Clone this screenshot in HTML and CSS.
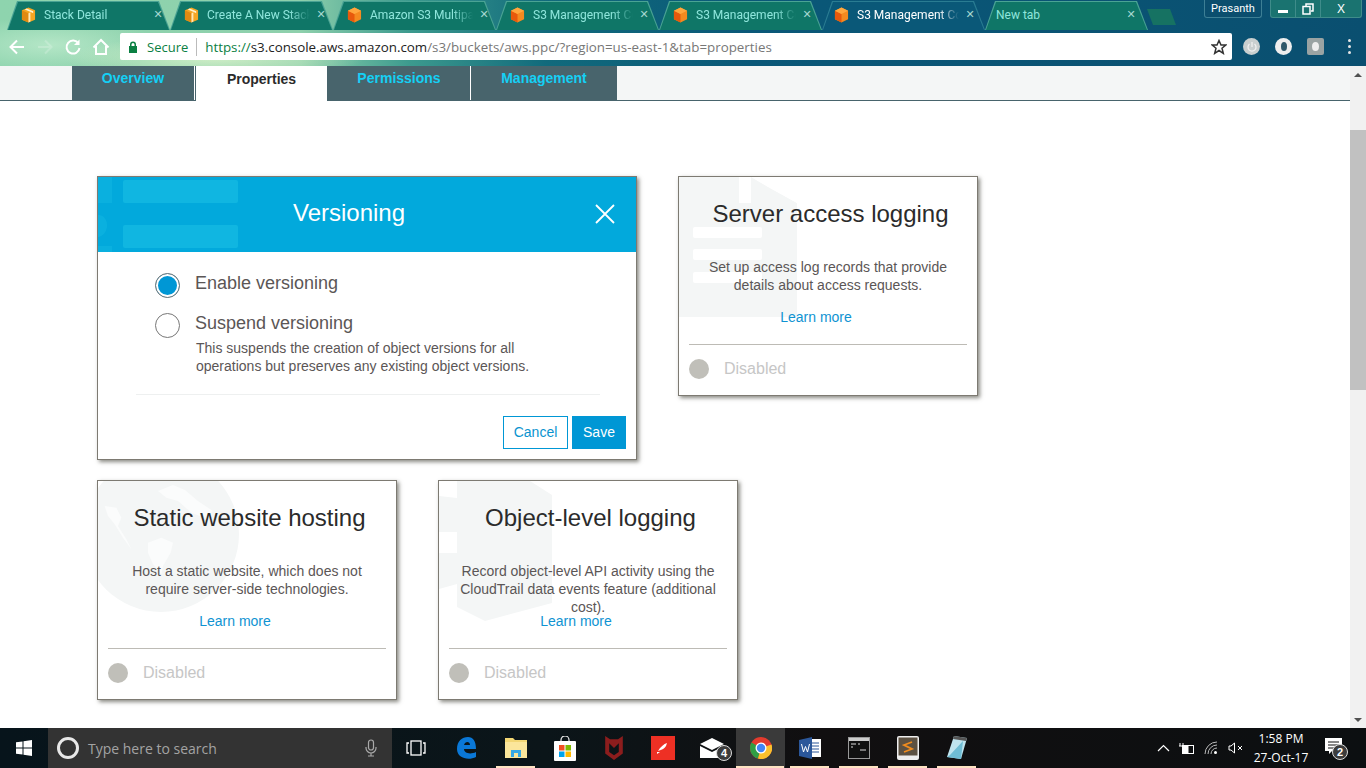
FILE: index.html
```html
<!DOCTYPE html>
<html lang="en">

<head>
    <meta charset="UTF-8">
    <meta name="viewport" content="width=device-width, initial-scale=1.0">
    <title>S3 Management Console</title>
    <link rel="stylesheet" href="styles.css">
</head>

<body>
    <svg class="defs" width="0" height="0">
        <symbol id="box-amber" viewBox="0 0 16 16">
            <path d="M8 0 15 3V13L8 16 1 13V3Z" fill="#f5a623"/>
            <path d="M1 3 8 6V16L1 13Z" fill="#e08a12"/>
            <path d="M6 1 13 4V6L11 5 4 2Z" fill="#fff2cc"/>
            <path d="M8 6 10 5V15L8 16Z" fill="#ffe9b8"/>
        </symbol>
        <symbol id="box-orange" viewBox="0 0 16 16">
            <path d="M8 0 15 3.500V12.500L8 16 1 12.500V3.500Z" fill="#f58a1f"/>
            <path d="M1 3.500 8 7V16L1 12.500Z" fill="#e8590c"/>
            <path d="M8 0 15 3.500 8 7 1 3.500Z" fill="#ffa63d"/>
        </symbol>
    </svg>

    <!-- browser window top -->
    <header class="chrome">
        <div class="tabstrip">
            <div class="tab"><svg class="favicon"><use href="#box-amber"/></svg><span class="tab-title">Stack Detail</span><span class="tab-close">✕</span></div>
            <div class="tab"><svg class="favicon"><use href="#box-amber"/></svg><span class="tab-title">Create A New Stack</span><span class="tab-close">✕</span></div>
            <div class="tab"><svg class="favicon"><use href="#box-orange"/></svg><span class="tab-title">Amazon S3 Multipa</span><span class="tab-close">✕</span></div>
            <div class="tab"><svg class="favicon"><use href="#box-orange"/></svg><span class="tab-title">S3 Management Co</span><span class="tab-close">✕</span></div>
            <div class="tab"><svg class="favicon"><use href="#box-orange"/></svg><span class="tab-title">S3 Management Co</span><span class="tab-close">✕</span></div>
            <div class="tab tab-active"><svg class="favicon"><use href="#box-orange"/></svg><span class="tab-title">S3 Management Co</span><span class="tab-close">✕</span></div>
            <div class="tab tab-new"><span class="tab-title">New tab</span><span class="tab-close">✕</span></div>
            <div class="newtab-btn"></div>
            <div class="window-controls">
                <div class="profile">Prasanth</div>
                <div class="win-buttons">
                    <span class="win-btn"><svg width="12" height="12" viewBox="0 0 12 12"><path d="M1 7H11V10H1Z" fill="#fff"/></svg></span>
                    <span class="win-btn"><svg width="12" height="12" viewBox="0 0 12 12" fill="none" stroke="#fff" stroke-width="1.500"><path d="M4 3V1H11V8H9M1 3.500H8V11H1Z"/></svg></span>
                    <span class="win-btn win-close">X</span>
                </div>
            </div>
        </div>
        <div class="toolbar">
            <svg class="tool" width="20" height="20" viewBox="0 0 20 20" fill="none" stroke="#fff" stroke-width="2"><path d="M17 10H4M10 3.500 3.500 10 10 16.500"/></svg>
            <svg class="tool tool-off" width="20" height="20" viewBox="0 0 20 20" fill="none" stroke="#fff" stroke-width="2"><path d="M3 10H16M10 3.500 16.500 10 10 16.500"/></svg>
            <svg class="tool" width="20" height="20" viewBox="0 0 20 20" fill="none" stroke="#fff" stroke-width="2"><path d="M15.500 6.500A6.500 6.500 0 1 0 16.500 11"/><path d="M16.500 2.500V8H11" fill="#fff" stroke="none"/></svg>
            <svg class="tool" width="20" height="20" viewBox="0 0 20 20" fill="none" stroke="#fff" stroke-width="2"><path d="M2.500 10.500 10 3 17.500 10.500M5 9V17H15V9"/></svg>
            <div class="omnibox">
                <svg class="lock" width="10" height="12" viewBox="0 0 10 12"><path d="M1 5H2V3.500A3 3 0 0 1 8 3.500V5H9V12H1ZM3.500 5H6.500V3.500A1.500 1.500 0 0 0 3.500 3.500Z" fill="#0b8043"/></svg>
                <span class="secure">Secure</span>
                <span class="url"><span class="url-scheme">https://</span><span class="url-host">s3.console.aws.amazon.com</span>/s3/buckets/aws.ppc/?region=us-east-1&amp;tab=properties</span>
                <svg class="star" width="16" height="16" viewBox="0 0 16 16" fill="none" stroke="#333" stroke-width="1.500"><path d="M8 1.500 10 6H14.800L11 9.200 12.300 14.300 8 11.500 3.700 14.300 5 9.200 1.200 6H6Z"/></svg>
            </div>
            <div class="extensions">
                <span class="ext ext-power"><svg width="10" height="10" viewBox="0 0 10 10" fill="none" stroke="#f0f0f0" stroke-width="1.300"><path d="M5 0V5M2.500 2A4 4 0 1 0 7.500 2"/></svg></span>
                <span class="ext ext-ring"></span>
                <span class="ext ext-square"></span>
                <span class="ext-menu"><i></i><i></i><i></i></span>
            </div>
        </div>
    </header>

    <div class="viewport">
        <main class="page">
            <nav class="subnav">
                <a class="subtab subtab-overview">Overview</a>
                <a class="subtab subtab-current">Properties</a>
                <a class="subtab subtab-permissions">Permissions</a>
                <a class="subtab subtab-management">Management</a>
            </nav>

            <div class="board">
                <div class="board-row">
                    <section class="modal">
                        <div class="modal-head">
                            <svg class="modal-mark" width="140" height="75" viewBox="0 0 140 75" fill="#10b6e1">
                                <rect x="25" y="3" width="115" height="23" rx="2"/>
                                <rect x="25" y="48" width="115" height="23" rx="2"/>
                                <path class="mark-faint" d="M0 0H14V26H0ZM0 38C12 38 12 58 0 60ZM0 69H14V75H0Z"/>
                            </svg>
                            <h2 class="modal-title">Versioning</h2>
                            <svg class="modal-close" width="20" height="20" viewBox="0 0 20 20" stroke="#fff" stroke-width="1.800"><path d="M1 1 19 19M19 1 1 19"/></svg>
                        </div>
                        <div class="modal-body">
                            <div class="option">
                                <span class="radio radio-on"></span>
                                <span class="option-label">Enable versioning</span>
                            </div>
                            <div class="option option-second">
                                <span class="radio"></span>
                                <div>
                                    <span class="option-label">Suspend versioning</span>
                                    <p class="option-note">This suspends the creation of object versions for all<br>operations but preserves any existing object versions.</p>
                                </div>
                            </div>
                        </div>
                        <div class="modal-foot">
                            <button class="btn btn-cancel">Cancel</button>
                            <button class="btn btn-save">Save</button>
                        </div>
                    </section>

                    <section class="card">
                        <svg class="card-mark" width="118" height="140" viewBox="0 0 118 140" fill="#f4f6f6">
                            <path d="M0 0H60V26H71V0L118 26V140H0Z" fill-rule="evenodd"/>
                            <g fill="#fff">
                                <path d="M60 0H72V26H60Z"/>
                                <path d="M72 0H118V26Z"/>
                                <rect x="14" y="50" width="69" height="11" rx="2"/>
                                <rect x="14" y="72" width="69" height="11" rx="2"/>
                                <rect x="14" y="95" width="69" height="11" rx="2"/>
                            </g>
                            <path d="M72 0 114 26H72Z"/>
                        </svg>
                        <h3 class="card-title">Server access logging</h3>
                        <p class="card-desc">Set up access log records that provide details about access requests.</p>
                        <a class="card-link">Learn more</a>
                        <div class="card-status"><span class="dot"></span><span class="status-text">Disabled</span></div>
                    </section>
                </div>

                <div class="board-row">
                    <section class="card">
                        <svg class="card-mark" width="142" height="134" viewBox="0 0 142 134">
                            <circle cx="63" cy="53" r="78" fill="#f4f6f6"/>
                            <g transform="scale(0.3333)" fill="#fbfcfc">
                                <path d="M180 30 225 12 262 28 300 60 345 90 320 110 280 95 240 60 205 50Z"/>
                                <path d="M20 75 55 80 70 110 60 135 85 175 100 205 75 170 50 130 30 105Z"/>
                                <path d="M150 185 190 170 225 185 218 215 195 255 190 280 165 250 150 215Z"/>
                            </g>
                        </svg>
                        <h3 class="card-title">Static website hosting</h3>
                        <p class="card-desc">Host a static website, which does not require server-side technologies.</p>
                        <a class="card-link">Learn more</a>
                        <div class="card-status"><span class="dot"></span><span class="status-text">Disabled</span></div>
                    </section>

                    <section class="card">
                        <svg class="card-mark" width="114" height="140" viewBox="0 0 114 140" fill="#f4f6f6">
                            <path d="M18 0H91L113 14V122L46 140 18 126Z"/>
                            <path d="M0 15 18 17V51H0ZM0 72H18V103L0 108Z"/>
                        </svg>
                        <h3 class="card-title">Object-level logging</h3>
                        <p class="card-desc">Record object-level API activity using the CloudTrail data events feature (additional cost).</p>
                        <a class="card-link">Learn more</a>
                        <div class="card-status"><span class="dot"></span><span class="status-text">Disabled</span></div>
                    </section>
                </div>
            </div>
        </main>

        <div class="scrollbar">
            <span class="arrow-up"></span>
            <span class="thumb"></span>
            <span class="arrow-down"></span>
        </div>
    </div>

    <!-- windows taskbar -->
    <footer class="taskbar">
        <div class="start">
            <svg width="16" height="16" viewBox="0 0 16 16" fill="#fff"><path d="M0 2.300 6.500 1.400V7.500H0ZM7.500 1.300 16 0V7.500H7.500ZM0 8.500H6.500V14.600L0 13.700ZM7.500 8.500H16V16L7.500 14.700Z"/></svg>
        </div>
        <div class="search">
            <span class="cortana"></span>
            <span class="search-text">Type here to search</span>
            <svg class="mic" width="12" height="18" viewBox="0 0 12 18" fill="none" stroke="#aaa" stroke-width="1.200"><rect x="3.500" y="1" width="5" height="10" rx="2.500"/><path d="M1 8V9A5 5 0 0 0 11 9V8M6 14V17M3 17H9"/></svg>
        </div>
        <div class="apps">
            <div class="app app-view"><svg width="20" height="16" viewBox="0 0 20 16" fill="none" stroke="#fff" stroke-width="1.300"><rect x="5" y="1" width="10" height="14"/><path d="M3 3H1V13H3M17 3H19V13H17"/></svg></div>
            <div class="app"><svg width="21" height="24" viewBox="0 0 21 24"><path d="M1 13C1 5 6 1 12 1 17 1 20 5 20 13H8C8 17 14 19 20 16V21C12 25 1 22 1 13ZM8 9H14C14 5 9 5 8 9Z" fill="#0a78d7"/></svg></div>
            <div class="app app-run"><svg width="22" height="22" viewBox="0 0 22 22"><path d="M0 1H8L10 3H22V21H0Z" fill="#f3d774"/><path d="M0 5H22V21H0Z" fill="#fbe69b"/><path d="M6 20V13H16V20H13V16H9V20Z" fill="#38a9e4"/></svg></div>
            <div class="app"><svg width="22" height="25" viewBox="0 0 22 25"><path d="M7 6V4A4 4 0 0 1 15 4V6" fill="none" stroke="#eee" stroke-width="1.200"/><rect y="5" width="22" height="20" rx="1" fill="#fff"/><rect x="5" y="9" width="5.500" height="5.500" fill="#f25022"/><rect x="11.500" y="9" width="5.500" height="5.500" fill="#7fba00"/><rect x="5" y="15.500" width="5.500" height="5.500" fill="#00a4ef"/><rect x="11.500" y="15.500" width="5.500" height="5.500" fill="#ffb900"/></svg></div>
            <div class="app"><svg width="22" height="24" viewBox="0 0 22 30"><path d="M0 0 6 4H16L22 0V22L11 30 0 22ZM5 9V20L11 24 17 20V9L11 15Z" fill="#8c1d1d"/></svg></div>
            <div class="app"><svg width="24" height="24" viewBox="0 0 24 24"><rect width="24" height="24" fill="#ee3024"/><path d="M7 15C9 11 13 8 16 7L15 10C14 12 11 14 7 15ZM6 16H9L6 18Z" fill="#fff"/></svg></div>
            <div class="app"><svg width="24" height="20" viewBox="0 0 24 20"><path d="M0 6 12 0 24 6 12 12Z" fill="#fff"/><path d="M0 8 12 14 24 8V20H0Z" fill="#fff"/></svg><span class="app-badge">4</span></div>
            <div class="app app-run app-current">
                <svg width="22" height="22" viewBox="0 0 22 22"><circle cx="11" cy="11" r="11" fill="#e33b2e"/><path d="M11 11 1.500 5.500A11 11 0 0 0 8 21.600Z" fill="#2f9e44"/><path d="M11 11 8 21.600A11 11 0 0 0 21.500 7.500Z" fill="#fbc02d"/><circle cx="11" cy="11" r="5.500" fill="#fff"/><circle cx="11" cy="11" r="4.200" fill="#4285f4"/></svg>
            </div>
            <div class="app app-run"><svg width="22" height="22" viewBox="0 0 22 22"><rect x="8" y="2" width="14" height="18" fill="#fff"/><path d="M11 6H20M11 9H20M11 12H20M11 15H20" stroke="#2b579a"/><path d="M0 3 13 0V22L0 19Z" fill="#2b579a"/><path d="M2.500 7 4.500 15 6.500 9.500 8.500 15 10.500 7" fill="none" stroke="#fff"/></svg></div>
            <div class="app app-run"><svg width="22" height="22" viewBox="0 0 22 22"><rect x=".5" y=".5" width="21" height="21" fill="#111" stroke="#999"/><rect x="1" y="1" width="20" height="3" fill="#ccc"/><path d="M3 7H8M10 7H12M3 10H5M12 13H18" stroke="#ddd"/></svg></div>
            <div class="app app-run"><svg width="22" height="24" viewBox="0 0 22 24"><rect width="22" height="24" rx="2" fill="#eee"/><rect x="1.500" y="1.500" width="19" height="18" fill="#5c5142"/><path d="M15 6 7 9 15 13 7 16" fill="none" stroke="#f08c1e" stroke-width="1.800"/></svg></div>
            <div class="app app-run"><svg width="22" height="26" viewBox="0 0 22 26"><path d="M8 1 21 3 15 24 1 22Z" fill="#bfe4ee"/><path d="M8 1 21 3 20 6 7 4Z" fill="#555"/><path d="M4 20 17 6 15 24 1 22Z" fill="#6fbdd4"/></svg></div>
        </div>
        <div class="tray">
            <svg class="tray-icon" width="13" height="8" viewBox="0 0 13 8" fill="none" stroke="#fff" stroke-width="1.200"><path d="M1 7 6.500 1.500 12 7"/></svg>
            <svg class="tray-icon" width="16" height="13" viewBox="0 0 16 13" fill="none" stroke="#fff"><rect x="3.500" y="3.500" width="11" height="8"/><rect x="4" y="4" width="5" height="7" fill="#fff"/><path d="M1 1V4M4 1V4M0 4H5V5L3 7"/></svg>
            <svg class="tray-icon" width="15" height="14" viewBox="0 0 15 14" fill="none" stroke="#bbb"><path d="M1 13A12 12 0 0 1 13 1M4 13A9 9 0 0 1 13 4M7 13A6 6 0 0 1 13 7"/><circle cx="11.500" cy="11.500" r="1.500" fill="#fff" stroke="none"/></svg>
            <svg class="tray-icon" width="15" height="12" viewBox="0 0 15 12" fill="none" stroke="#fff"><path d="M1 4H3L6.500 1V11L3 8H1ZM10 4 14 8M14 4 10 8"/></svg>
            <div class="clock"><span>1:58 PM</span><span>27-Oct-17</span></div>
            <div class="notify">
                <svg width="17" height="17" viewBox="0 0 17 17"><path d="M0 0H17V13H7L4 16V13H0Z" fill="#fff"/><path d="M3 4H14M3 7H14M3 10H10" stroke="#111"/></svg>
                <span class="app-badge notify-badge">2</span>
            </div>
        </div>
    </footer>
</body>

</html>
```
FILE: styles.css
```css
* {
  box-sizing: border-box;
}
body {
  margin: 0;
  width: 1366px;
  height: 768px;
  overflow: hidden;
  display: flex;
  flex-direction: column;
  background: #fff;
  font-family: 'Liberation Sans', Arial, sans-serif;
}
.defs {
  position: absolute;
}
/* Browser top */
.chrome {
  height: 66px;
  flex: none;
  background:
    radial-gradient(ellipse 150px 22px at 215px 58px, rgba(225, 245, 205, 0.8) 0%, rgba(225, 245, 205, 0) 100%),
    radial-gradient(ellipse 110px 28px at 50px 45px, rgba(190, 235, 205, 0.8) 0%, rgba(190, 235, 205, 0) 100%),
    linear-gradient(90deg, #8ed4ae 0%, #8ed0ac 22%, #3c9a8e 30%, #116a7c 40%, #0a5878 55%, #0a4f70 100%);
  display: flex;
  flex-direction: column;
}
.tabstrip {
  height: 33px;
  display: flex;
  padding: 1px 0 0 7px;
  position: relative;
}
.tab {
  width: 163px;
  height: 29px;
  flex: none;
  position: relative;
  display: flex;
  align-items: center;
  padding: 0 8px 2px 14px;
  font-family: Roboto, sans-serif;
  font-size: 12px;
  color: #8fe6dc;
  clip-path: polygon(10px 0, 152px 0, 163px 100%, 0 100%);
  background: #4aa394;
}
.tab:nth-child(-n+3) {
  padding-right: 5px;
}
.tab::before {
  content: "";
  position: absolute;
  inset: 1px 1px 0 1px;
  clip-path: polygon(10px 0, 150px 0, 161px 100%, 0 100%);
  background: #0f7667;
}
.tab > * {
  position: relative;
}
.tab-active {
  padding-left: 12px;
  color: #fff;
  background: #2a7c92;
}
.tab-active::before {
  background: #0a5878;
}
.tab-new {
  padding-left: 11px;
  padding-right: 10px;
}
.favicon {
  width: 15px;
  height: 16px;
  flex: none;
  margin-right: 8px;
}
.tab-title {
  flex: 1;
  white-space: nowrap;
  overflow: hidden;
  -webkit-mask-image: linear-gradient(90deg, #000 80%, transparent 100%);
  mask-image: linear-gradient(90deg, #000 80%, transparent 100%);
}
.tab-new .tab-title {
  -webkit-mask-image: none;
  mask-image: none;
}
.tab-close {
  width: 14px;
  margin-left: 4px;
  font-size: 11px;
  font-weight: 700;
  color: #a5d8d0;
  text-align: center;
  font-family: 'DejaVu Sans', sans-serif;
}
.newtab-btn {
  width: 29px;
  height: 16px;
  margin: 8px 0 0 -1px;
  background: #167262;
  clip-path: polygon(0 0, 23px 0, 29px 100%, 6px 100%);
}
.window-controls {
  position: absolute;
  top: 0;
  right: 4px;
  display: flex;
  gap: 8px;
}
.profile {
  width: 58px;
  height: 18px;
  border: 1px solid #3d7f95;
  border-top: 0;
  border-radius: 0 0 3px 3px;
  background: #0b4e6e;
  color: #fff;
  font-family: Roboto, sans-serif;
  font-size: 11px;
  line-height: 18px;
  text-align: center;
}
.win-buttons {
  display: flex;
  width: 92px;
  height: 18px;
  border: 1px solid #3f8c8a;
  border-top: 0;
  border-radius: 0 0 3px 3px;
  background: #1a7370;
}
.win-btn {
  flex: 25px;
  display: flex;
  align-items: center;
  justify-content: center;
  border-left: 1px solid #3f8c8a;
  color: #fff;
  font-size: 12px;
}
.win-btn:first-child {
  border-left: 0;
}
.win-close {
  flex: 42px;
}
.toolbar {
  height: 33px;
  display: flex;
  align-items: center;
  padding: 0 0 6px 7px;
}
.tool {
  flex: none;
  margin-right: 8px;
}
.tool-off {
  opacity: 0.2;
}
.omnibox {
  width: 1112px;
  height: 27px;
  margin-left: 1px;
  flex: none;
  display: flex;
  align-items: center;
  padding: 0 5px 0 8px;
  background: #fff;
  border-radius: 2px;
  font-family: 'Open Sans', sans-serif;
  font-size: 13.35px;
  color: #777;
}
.lock {
  margin: 0 9px 0 0;
}
.secure {
  color: #0b8043;
  font-size: 13px;
  padding-right: 8px;
  margin-right: 8px;
  border-right: 1px solid #bbb;
  line-height: 18px;
}
.url {
  flex: 1;
}
.url-scheme {
  color: #0b8043;
}
.url-host {
  color: #222;
}
.extensions {
  flex: 1;
  display: flex;
  align-items: center;
  padding-left: 11px;
}
.ext {
  width: 17px;
  height: 17px;
  margin-right: 15px;
  display: flex;
  align-items: center;
  justify-content: center;
  background: #c9cfcf;
  border-radius: 50%;
}
.ext-ring {
  background: #eee;
  position: relative;
}
.ext-ring::after {
  content: "";
  width: 6px;
  height: 9px;
  border-radius: 50%;
  background: #30586a;
}
.ext-square {
  border-radius: 2px;
  background: #9aa3a3;
  position: relative;
}
.ext-square::after {
  content: "";
  width: 7px;
  height: 9px;
  border-radius: 50%;
  background: #eee;
}
.ext-menu {
  display: flex;
  flex-direction: column;
  gap: 3px;
  margin-left: 9px;
}
.ext-menu i {
  width: 3px;
  height: 3px;
  background: #e6e6e6;
  border-radius: 50%;
}

/* Page */
.viewport {
  flex: 1;
  min-height: 0;
  display: flex;
}
.page {
  flex: 1;
  min-width: 0;
}
.subnav {
  height: 35px;
  display: flex;
  padding-left: 72px;
  background: #f4f6f6;
  border-bottom: 1px solid #48646c;
}
.subtab {
  height: 34px;
  background: #48646c;
  color: #14d0f5;
  font-size: 14px;
  font-weight: 700;
  line-height: 25px;
  text-align: center;
  border-right: 1px solid #fff;
}
.subtab-overview {
  width: 123px;
}
.subtab-current {
  width: 133px;
  height: 35px;
  background: #fff;
  color: #2b2b2b;
  line-height: 27px;
  border-left: 1px solid #48646c;
  border-right: 1px solid #48646c;
}
.subtab-permissions {
  width: 143px;
}
.subtab-management {
  width: 146px;
  border-right: 0;
}
.board {
  padding: 75px 0 0 97px;
}
.board-row {
  display: flex;
  align-items: flex-start;
  gap: 41px;
  margin-bottom: 20px;
}
.modal,
.card {
  background: #fff;
  border: 1px solid #7d7a72;
  box-shadow: 2px 2px 4px rgba(60, 60, 50, 0.6);
  position: relative;
}
.modal {
  width: 540px;
  height: 284px;
}
.modal-head {
  height: 75px;
  background: #02a9dc;
  display: flex;
  align-items: center;
  padding: 0 0 1px 5px;
  position: relative;
  color: #fff;
}
.modal-mark {
  position: absolute;
  left: 0;
  top: 0;
}
.mark-faint {
  opacity: 0.6;
}
.modal-title {
  flex: 1;
  margin: -2px 0 0;
  font-size: 24px;
  font-weight: 400;
  text-align: center;
  position: relative;
}
.modal-close {
  margin-right: 21px;
  position: relative;
}
.modal-body {
  height: 143px;
  margin: 0 36px 0 38px;
  padding: 21px 0 0 19px;
  border-bottom: 1px solid #eef0f0;
}
.option {
  display: flex;
  gap: 15px;
  height: 25px;
}
.option-second {
  margin-top: 15px;
  height: auto;
}
.radio {
  width: 25px;
  height: 25px;
  flex: none;
  border-radius: 50%;
  border: 1px solid #777;
  background: #fff;
}
.radio-on {
  background: #0097d5;
  box-shadow: inset 0 0 0 2px #fff;
}
.option-label {
  font-size: 18px;
  line-height: 21px;
  display: block;
  color: #5b5656;
}
.option-note {
  margin: 5px 0 0 1px;
  font-size: 14px;
  line-height: 18px;
  color: #5b5656;
}
.modal-foot {
  display: flex;
  justify-content: flex-end;
  gap: 4px;
  padding: 21px 10px 0 0;
}
.btn {
  height: 33px;
  font-family: inherit;
  font-size: 14px;
  padding: 0 0 2px;
  border: 1px solid #0097d5;
}
.btn-cancel {
  width: 65px;
  background: #fff;
  color: #0a93cf;
}
.btn-save {
  width: 54px;
  background: #0097d5;
  color: #fff;
}
.card {
  width: 300px;
  height: 220px;
}
.card-mark {
  position: absolute;
  left: 0;
  top: 0;
}
.card-title {
  position: relative;
  margin: 0;
  padding: 23px 0 0 5px;
  height: 81px;
  font-size: 24px;
  font-weight: 400;
  line-height: 28px;
  text-align: center;
  color: #2b2b2b;
}
.card-desc {
  position: relative;
  margin: 0 20px;
  height: 36px;
  font-size: 14px;
  line-height: 18px;
  text-align: center;
  color: #5b5656;
}
.card-link {
  position: relative;
  display: block;
  margin-top: 14px;
  padding-right: 24px;
  font-size: 14px;
  line-height: 18px;
  text-align: center;
  color: #0f93d2;
}
.card-status {
  position: relative;
  margin: 18px 10px 0;
  padding-top: 14px;
  border-top: 1px solid #bdbbb5;
  display: flex;
  align-items: center;
  gap: 15px;
}
.dot {
  width: 20px;
  height: 20px;
  border-radius: 50%;
  background: #c0bfb9;
}
.status-text {
  font-size: 16px;
  color: #c6c6c6;
}
.scrollbar {
  width: 16px;
  flex: none;
  background: #f1f1f1;
  display: flex;
  flex-direction: column;
  align-items: center;
  padding-top: 7px;
}
.arrow-up {
  border: 4px solid transparent;
  border-top: 0;
  border-bottom: 4px solid #505050;
}
.thumb {
  width: 16px;
  height: 260px;
  margin-top: 53px;
  background: #c1c1c1;
}
.arrow-down {
  margin-top: auto;
  margin-bottom: 6px;
  border: 4px solid transparent;
  border-bottom: 0;
  border-top: 4px solid #505050;
}

/* Taskbar */
.taskbar {
  height: 40px;
  flex: none;
  display: flex;
  background: linear-gradient(90deg, #07141b, #0b1519 40%, #110f10 60%, #0c0f11);
  color: #fff;
}
.start {
  width: 48px;
  display: flex;
  align-items: center;
  justify-content: center;
}
.search {
  width: 344px;
  display: flex;
  align-items: center;
  padding: 0 15px 0 9px;
  background: #333;
  color: #a3a3a3;
  font-family: 'Open Sans', sans-serif;
  font-size: 14px;
}
.cortana {
  width: 22px;
  height: 22px;
  border-radius: 50%;
  border: 3px solid #e8e8e8;
  margin-right: 9px;
}
.search-text {
  flex: 1;
}
.apps {
  display: flex;
  padding-left: 1px;
}
.app {
  width: 49px;
  position: relative;
  display: flex;
  align-items: center;
  justify-content: center;
}
.app-view svg {
  margin-right: 3px;
}
.app-run::after {
  content: "";
  position: absolute;
  left: 5px;
  right: 5px;
  bottom: 0;
  height: 2px;
  background: #fde3c2;
}
.app-current {
  background: #3a3a3a;
}
.app-current::after {
  left: 0;
  right: 1px;
}
.app-badge {
  position: absolute;
  left: 29px;
  top: 17px;
  width: 16px;
  height: 16px;
  border-radius: 50%;
  background: #3c3c3c;
  border: 1px solid #ddd;
  font-size: 11px;
  font-weight: 700;
  line-height: 14px;
  text-align: center;
}
.tray {
  flex: 1;
  display: flex;
  align-items: center;
  justify-content: flex-end;
  padding-right: 24px;
}
.tray-icon {
  margin-right: 9px;
}
.clock {
  width: 56px;
  margin: 0 16px 0 1px;
  display: flex;
  flex-direction: column;
  align-items: center;
  font-family: 'Open Sans', sans-serif;
  font-size: 12px;
  line-height: 19px;
}
.notify {
  position: relative;
}
.notify-badge {
  left: 7px;
  top: 6px;
}
```
